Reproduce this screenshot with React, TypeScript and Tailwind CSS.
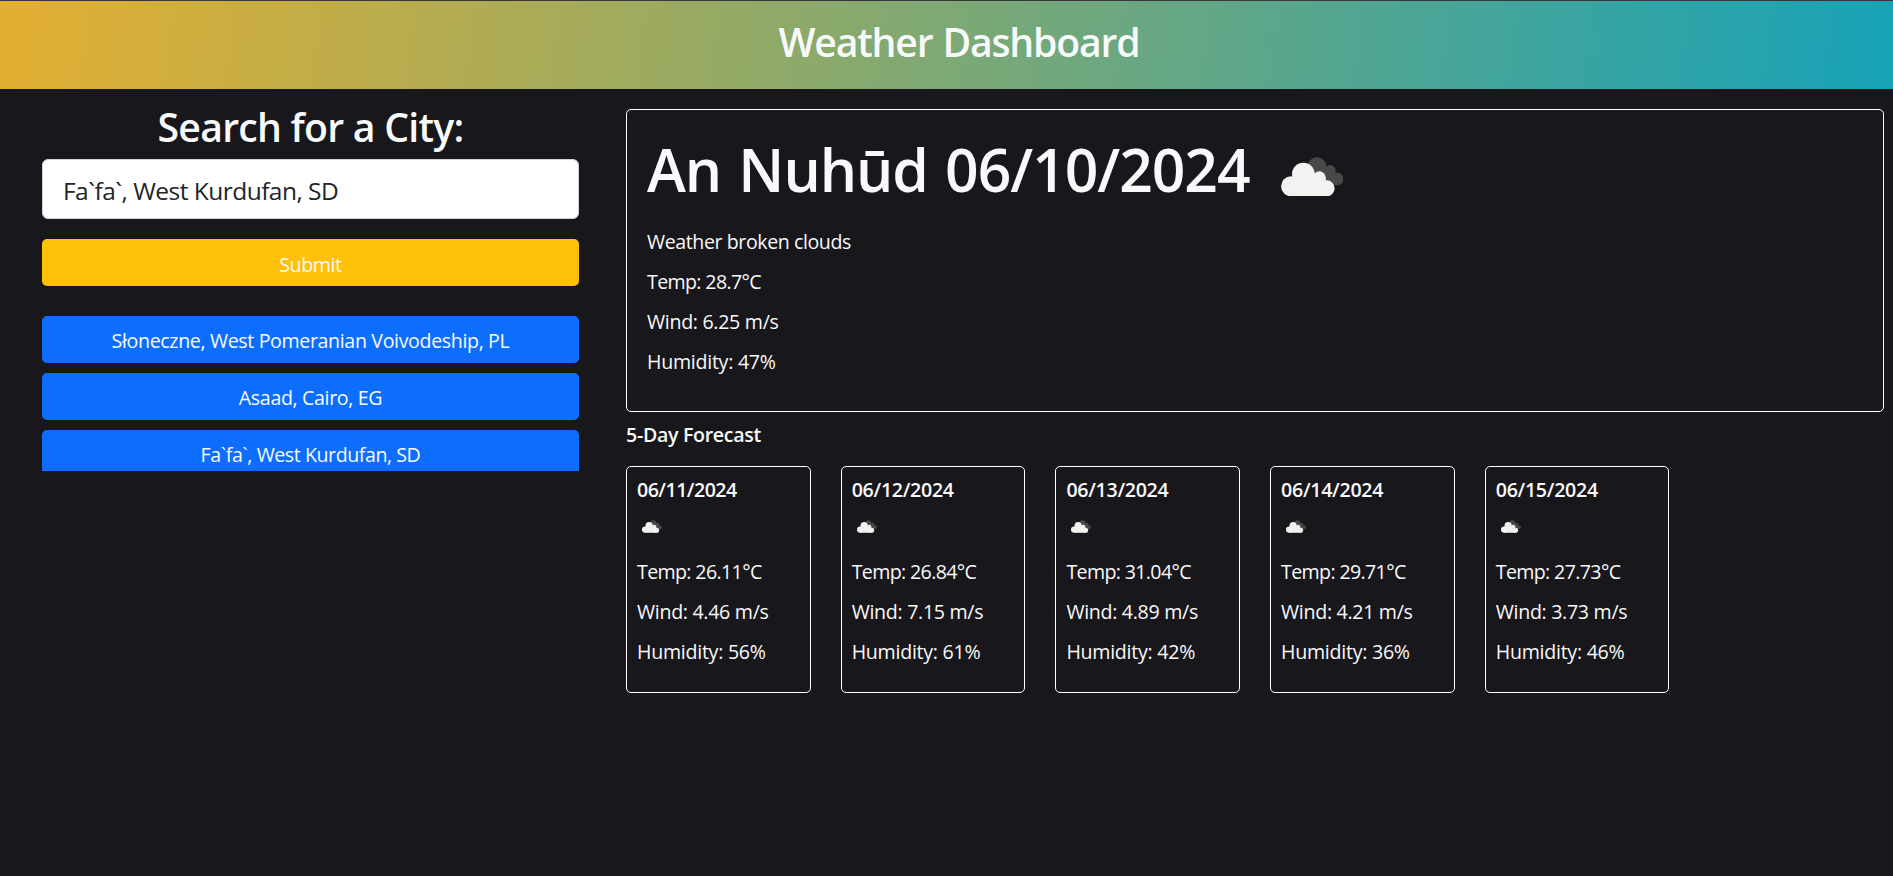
type Day = { date: string; temp: string; wind: string; humidity: string; tracking?: string };

const days: Day[] = [
  { date: '06/11/2024', temp: '26.11', wind: '4.46', humidity: '56', tracking: 'tracking-[-0.0267em]' },
  { date: '06/12/2024', temp: '26.84', wind: '7.15', humidity: '61' },
  { date: '06/13/2024', temp: '31.04', wind: '4.89', humidity: '42' },
  { date: '06/14/2024', temp: '29.71', wind: '4.21', humidity: '36' },
  { date: '06/15/2024', temp: '27.73', wind: '3.73', humidity: '46' },
];

const history = [
  { name: 'Słoneczne, West Pomeranian Voivodeship, PL', tracking: 'tracking-[-0.0181em]' },
  { name: 'Asaad, Cairo, EG', tracking: 'tracking-[-0.0176em]' },
  { name: 'Fa`fa`, West Kurdufan, SD', tracking: 'tracking-[-0.0222em]' },
];

function BrokenClouds({ className }: { className: string }) {
  return (
    <svg viewBox="0 0 188 118" className={className} aria-hidden="true">
      <g fill="#484848">
        <circle cx="108" cy="29" r="28.5" />
        <circle cx="147" cy="41" r="17" />
        <circle cx="168" cy="66" r="19.5" />
        <path d="M108 29 147 41 168 66 168 85 110 80Z" />
      </g>
      <g fill="#f2f2f0">
        <circle cx="30" cy="88" r="30" />
        <circle cx="67" cy="51" r="34" />
        <circle cx="115" cy="62" r="19" />
        <circle cx="137" cy="94" r="24" />
        <path d="M30 60H134V118H30Z" />
      </g>
    </svg>
  );
}

function Stats({ temp, wind, humidity }: Pick<Day, 'temp' | 'wind' | 'humidity'>) {
  return (
    <>
      <p className="tracking-[-0.0325em]">Temp: {temp}°C</p>
      <p className="tracking-[-0.0155em]">Wind: {wind} m/s</p>
      <p className="tracking-[-0.0135em]">Humidity: {humidity}%</p>
    </>
  );
}

export default function App() {
  return (
    <div className="min-h-screen bg-[#18171b] font-['Open_Sans','Noto_Sans',sans-serif] text-[19.6px] leading-6 text-[#f8f9fa]">
      <header className="h-[89px] border-t border-[#38373b] bg-[linear-gradient(98deg,#e4af31,#17a2b8)] bg-origin-border pt-[17px] pl-[25px] text-center">
        <h1 className="text-[39.2px] leading-12 font-semibold tracking-[-0.0304em] [word-spacing:1px]">Weather Dashboard</h1>
      </header>

      <main className="flex">
        <aside className="ml-[42px] w-[537px] pt-[14px] text-center">
          <h2 className="text-[39.2px] leading-12 font-semibold tracking-[-0.019em]">Search for a City:</h2>
          <input
            type="text"
            defaultValue="Fa`fa`, West Kurdufan, SD"
            className="mt-2 block h-[60px] w-full rounded-md border border-[#ced4da] bg-white px-[20px] pt-1 pb-px text-[24.5px] tracking-[-0.0215em] text-[#212529] outline-none"
          />
          <button className="mt-5 flex h-[47px] w-full items-center justify-center rounded-[5px] bg-[#ffc107] pt-1 tracking-[-0.0187em]">
            Submit
          </button>
          <div className="mt-[30px] flex h-[155px] flex-col gap-[10px] overflow-hidden">
            {history.map((h) => (
              <button
                key={h.name}
                className={`flex h-[47px] w-full shrink-0 items-center justify-center rounded-[5px] bg-[#0d6efd] pt-[3px] ${h.tracking}`}
              >
                {h.name}
              </button>
            ))}
          </div>
        </aside>

        <section className="ml-[47px] w-[1258px] pt-5">
          <div className="h-[303px] rounded-[5px] border border-white px-5 pt-[23px]">
            <div className="flex">
              <h2 className="text-[58.8px] leading-[72px] font-semibold tracking-[-0.0177em] [word-spacing:3px]">
                An Nuhūd 06/10/2024
              </h2>
              <BrokenClouds className="mt-[24px] ml-[31px] h-[39.3px] w-[62.7px]" />
            </div>
            <div className="mt-[25px] flex flex-col gap-4">
              <p className="tracking-[-0.0214em]">Weather broken clouds</p>
              <Stats temp="28.7" wind="6.25" humidity="47" />
            </div>
          </div>

          <h3 className="mt-[11px] font-semibold tracking-[-0.016em]">5-Day Forecast</h3>
          <div className="mt-[19px] flex gap-[30px]">
            {days.map((d) => (
              <article key={d.date} className="h-[227px] w-[184.7px] rounded-[5px] border border-white pt-[11px] pl-[10px]">
                <h4 className={`font-semibold ${d.tracking ?? 'tracking-[-0.0145em]'}`}>{d.date}</h4>
                <BrokenClouds className="mt-[18px] ml-[5px] h-[13px] w-5" />
                <div className="mt-[27px] flex flex-col gap-4">
                  <Stats temp={d.temp} wind={d.wind} humidity={d.humidity} />
                </div>
              </article>
            ))}
          </div>
        </section>
      </main>
    </div>
  );
}
